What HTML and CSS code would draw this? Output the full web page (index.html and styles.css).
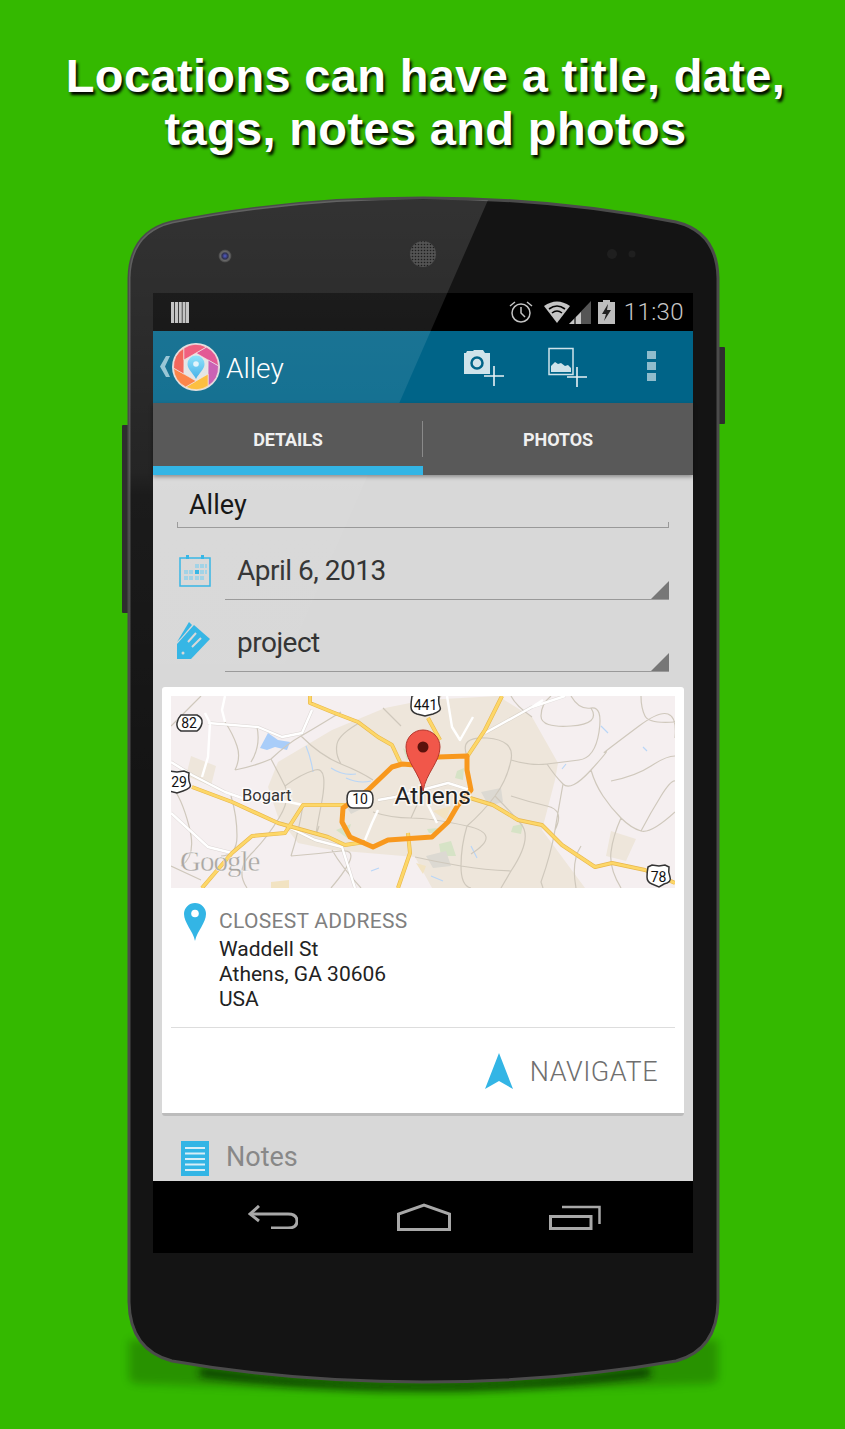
FILE: index.html
```html
<!DOCTYPE html>
<html lang="en">

<head>
    <meta charset="UTF-8">
    <title>Alley - Locations</title>
    <link rel="stylesheet" href="styles.css">
</head>

<body>
    <div class="page">
        <h1 class="headline">Locations can have a title, date,<br>tags, notes and photos</h1>

        <div class="phone">
            <!-- shell artwork, behind the screen -->
            <svg class="shell" viewBox="100 180 650 1220">
                <defs>
                    <filter id="soft" x="-10%" y="-50%" width="120%" height="200%">
                        <feGaussianBlur stdDeviation="4" />
                    </filter>
                    <radialGradient id="lens">
                        <stop offset="0" stop-color="#3a46c8" />
                        <stop offset=".45" stop-color="#14163a" />
                        <stop offset=".7" stop-color="#555" />
                        <stop offset="1" stop-color="#2a2a2a" />
                    </radialGradient>
                    <pattern id="mesh" width="3" height="3" patternUnits="userSpaceOnUse">
                        <circle cx="1.500" cy="1.500" r=".8" fill="#000" />
                    </pattern>
                </defs>
                <path d="M129 1340H718V1378Q718 1384 700 1384Q560 1390 423 1390Q290 1390 147 1384Q129 1384 129 1378Z" fill="#0b3a00" opacity=".3" filter="url(#soft)" />
                <path d="M200 1368Q320 1384 423 1384Q530 1384 650 1368V1376Q530 1390 423 1390Q320 1390 200 1376Z" fill="#041c00" opacity=".85" filter="url(#soft)" />
                <rect x="122" y="425" width="8" height="188" rx="1" fill="#2e2e2e" />
                <rect x="718" y="347" width="7" height="77" rx="1" fill="#2e2e2e" />
                <path d="M129 278Q130 232 172 222Q290 198 423 198Q556 198 676 222Q717 232 718 278V1302Q717 1350 676 1361Q556 1382 423 1382Q290 1382 172 1361Q130 1350 129 1302Z" fill="#141414" stroke="#4b4b4b" stroke-width="3" />
                <circle cx="225" cy="256" r="6.500" fill="url(#lens)" />
                <circle cx="423" cy="254" r="14.500" fill="#151515" />
                <circle cx="423" cy="254" r="13" fill="#3c3c3c" />
                <circle cx="423" cy="254" r="13" fill="url(#mesh)" />
                <circle cx="612" cy="254" r="5" fill="#1f1f1f" />
                <circle cx="632" cy="254" r="3.500" fill="#1f1f1f" />
            </svg>

            <div class="screen">
                <div class="status-bar">
                    <svg class="ic-barcode" viewBox="0 0 18 21">
                        <path d="M0 0h3.200v21H0zM4 0h3.200v21H4zM8 0h2.800v21H8zM11.500 0h3v21h-3zM15 0h3v21h-3z" fill="#bdbdbd" />
                    </svg>
                    <div class="status-right">
                        <svg class="ic-alarm" viewBox="0 0 24 24" fill="none" stroke="#c4c4c4">
                            <circle cx="12" cy="13" r="9" stroke-width="1.500" />
                            <path d="M12 7v6l4 4" stroke-width="1.500" />
                            <path d="M1 6l5-4M23 6l-5-4" stroke-width="1.500" />
                        </svg>
                        <svg class="ic-signal" viewBox="0 0 48 24">
                            <path d="M0 6Q13-3 26 6L13 23Z" fill="#c4c4c4" />
                            <path d="M5 9Q13 3 21 9M8 13Q13 9 18 13" fill="none" stroke="#000" stroke-width="1.600" />
                            <path d="M25 24L47 1V24Z" fill="#555" />
                            <path d="M25 24L30 19V24ZM32 24V17L37 12V24Z" fill="#c4c4c4" />
                        </svg>
                        <svg class="ic-battery" viewBox="0 0 17 24">
                            <path d="M5 0h7v2h5v22H0V2h5z" fill="#bdbdbd" />
                            <path d="M10 4L4 14h4l-2 7 7-11H9z" fill="#222" />
                        </svg>
                        <span class="clock">11:30</span>
                    </div>
                </div>

                <div class="app-bar">
                    <svg class="ic-chevron" viewBox="0 0 10 21">
                        <path d="M10 0L5 10.500 10 21H6L0 10.500 6 0z" fill="#8fc0d2" />
                    </svg>
                    <svg class="logo" viewBox="0 0 48 48">
                        <defs>
                            <linearGradient id="logo-pin" x1="0" y1="0" x2="0" y2="1">
                                <stop offset="0" stop-color="#86e0fa" />
                                <stop offset="1" stop-color="#33a9e6" />
                            </linearGradient>
                        </defs>
                        <circle cx="24" cy="24" r="24" fill="#dcdcdc" />
                        <circle cx="24" cy="24" r="16" fill="#e2e2e2" />
                        <g stroke="#f0e6e6" stroke-width=".6">
                            <path d="M24 10L36 17 46.500 23.100A22.500 22.500 0 0 0 34.300 4Z" fill="#e0488a" />
                            <path d="M24 10L36 17 46.500 23.100A22.500 22.500 0 0 0 34.300 4Z" fill="#c552ad" transform="rotate(60 24 24)" />
                            <path d="M24 10L36 17 46.500 23.100A22.500 22.500 0 0 0 34.300 4Z" fill="#fdb92e" transform="rotate(120 24 24)" />
                            <path d="M24 10L36 17 46.500 23.100A22.500 22.500 0 0 0 34.300 4Z" fill="#fc7a38" transform="rotate(180 24 24)" />
                            <path d="M24 10L36 17 46.500 23.100A22.500 22.500 0 0 0 34.300 4Z" fill="#f2574c" transform="rotate(240 24 24)" />
                            <path d="M24 10L36 17 46.500 23.100A22.500 22.500 0 0 0 34.300 4Z" fill="#ef4f72" transform="rotate(300 24 24)" />
                        </g>
                        <path d="M24 36C21 30 15.500 26.500 15.500 21A8.500 8.500 0 0 1 32.500 21C32.500 26.500 27 30 24 36Z" fill="url(#logo-pin)" />
                        <circle cx="24" cy="21" r="2.800" fill="#dff3fb" />
                    </svg>
                    <span class="app-title">Alley</span>
                    <div class="actions">
                        <svg class="ic-action" viewBox="0 0 42 40">
                            <path d="M0 6h2l1-2h6l1-1h9l2 3h5v21H0z" fill="#cfe3ea" />
                            <circle cx="13" cy="16" r="5.500" fill="none" stroke="#006488" stroke-width="2.500" />
                            <path d="M30 19v20M20 29h20" stroke="#e8f1f4" stroke-width="1.600" />
                        </svg>
                        <svg class="ic-action ic-gallery" viewBox="0 0 42 40">
                            <rect x="1" y="1.500" width="24" height="26" fill="none" stroke="#cfe3ea" stroke-width="1.500" />
                            <path d="M3 25v-6l4-4 3 2 3-1 4 3 3-1 3 3v4z" fill="#cfe3ea" />
                            <path d="M29 20v20M19 30h20" stroke="#e8f1f4" stroke-width="1.600" />
                        </svg>
                        <div class="overflow">
                            <span></span>
                            <span></span>
                            <span></span>
                        </div>
                    </div>
                </div>

                <div class="tabs">
                    <div class="tab tab-active">DETAILS</div>
                    <div class="tab">PHOTOS</div>
                </div>

                <div class="content">
                    <div class="name-field">Alley</div>

                    <div class="row">
                        <svg class="ic-calendar" viewBox="0 0 32 32">
                            <rect x="1" y="3" width="30" height="28" fill="none" stroke="#33b5e5" stroke-width="1.500" />
                            <path d="M7 0h3v4H7zM22 0h3v4h-3z" fill="#33b5e5" />
                            <path d="M16 9h4v4h-4zM21 9h4v4h-4zM26 9h2v4h-2zM5 15h4v4H5zM10 15h4v4h-4zM21 15h4v4h-4zM26 15h2v4h-2zM5 21h4v4H5zM10 21h4v4h-4zM16 21h4v4h-4zM21 21h4v4h-4z" fill="#a0d2e6" />
                            <path d="M16 15h4v4h-4z" fill="#33b5e5" />
                        </svg>
                        <div class="field">April 6, 2013</div>
                    </div>

                    <div class="row">
                        <svg class="ic-tag" viewBox="0 0 34 38">
                            <path d="M12 0l3 3L4 16 0 20z" fill="#33b5e5" />
                            <path d="M17 3L33 17 14 37H0V22Z" fill="#33b5e5" />
                            <path d="M11 20l8-9M15 25l9-9" stroke="#d8d8d8" stroke-width="2" />
                            <circle cx="6" cy="31" r="1.500" fill="#d8d8d8" />
                        </svg>
                        <div class="field">project</div>
                    </div>

                    <div class="card">
                        <svg class="map" viewBox="0 0 504 192" font-family="Roboto, sans-serif">
                            <rect width="504" height="192" fill="#f5eff0" />
                            <path d="M107 66L161 34 214 12 254 4 327 0 361 21 387 67 384 84 371 134 414 192H261L244 161 161 154 127 147 107 121 97 91ZM20 60L45 70 40 90 15 80ZM440 135L465 143 455 165 435 160Z" fill="#eee6db" />

                            <!-- water -->
                            <path d="M89 52L97 37 107 44 119 46 116 54 104 51 96 54Z" fill="#a9cdf9" />
                            <path d="M135 50Q140 62 142 76M175 82Q188 88 200 85M160 72Q172 80 185 78M430 30L437 37M472 51L476 55M395 68L391 73M200 175L208 172M260 180L272 185M300 150L306 162" fill="none" stroke="#b9d6f7" stroke-width="1.200" />

                            <!-- parks and blocks -->
                            <path d="M232 52L240 58 236 64ZM286 75L293 72 292 84 284 82ZM165 134L180 128 176 142ZM256 133L268 132 266 137 258 137ZM342 130L352 128 350 138 340 136ZM268 148L280 145 285 160 270 160Z" fill="#d6e3c6" />
                            <path d="M175 110L185 104 192 112 180 118ZM255 160L275 155 280 170 262 172ZM310 96L330 92 332 106 318 110Z" fill="#dcd9d2" />
                            <path d="M100 186L118 184 118 192 100 192ZM245 167L255 170 252 178ZM262 115L280 110 275 124Z" fill="#f2e3c2" />

                            <!-- minor roads -->
                            <path fill="none" stroke="#cfc8bc" stroke-width="1.200" stroke-linejoin="round" d="M54 26Q62 38 66 50T64 74M64 74Q84 70 100 63Q108 78 114 90T108 122Q96 142 80 158T76 192M100 63Q116 48 130 40T170 16M130 40Q150 60 170 68T202 84M114 90Q130 78 144 74T150 110T148 130M170 68Q164 58 166 48T190 26M202 116Q220 122 240 122T296 130T300 158M240 122L250 100M296 130Q312 116 324 100T340 64T316 42T296 60M340 64Q360 70 376 68T408 64T428 36T420 12T400 0M376 68Q384 80 392 88T420 74T434 56T468 30T504 42M420 74Q424 88 432 100T450 122T470 135T504 116M392 88Q388 110 384 134T370 186L372 192M450 122Q442 140 440 156T450 192M340 100Q358 106 376 110T384 134M324 100Q338 114 350 128T340 175L330 192M296 130Q290 150 290 170T300 192M244 161Q266 166 290 170T340 175M120 160Q146 158 170 155T160 192M0 170L30 184M60 100Q66 120 66 140T50 160M0 30Q10 20 20 10L30 0M380 0Q370 8 370 20T400 30T420 12M470 0Q470 12 474 20T504 26M470 135Q480 116 490 100T504 85M270 0L254 20M212 12Q222 22 230 30M410 150Q400 165 405 192M440 85Q465 80 480 70T504 60M340 0Q345 10 361 21M0 90Q10 100 18 130T10 170M86 31Q90 50 80 66M132 109Q128 135 120 160M161 154Q170 170 190 192" />

                            <!-- white roads -->
                            <g fill="none" stroke="#b9b4ac" stroke-width="3.400" opacity=".4" stroke-linejoin="round">
                                <path d="M0 66L21 79 54 96 71 102M0 117L37 151 61 157M107 126L144 144 171 151 184 192M37 27L87 31 111 41 131 37 141 14M207 104L224 101 277 87 299 94M314 37L361 11 394 0" />
                            </g>
                            <g fill="none" stroke="#fff" stroke-width="2.400" stroke-linejoin="round">
                                <path d="M0 66L21 79 54 96 71 102 118 106 132 109M0 117L37 151 61 157M107 126L144 144 171 151 184 192M34 17L39 27 37 61 31 81M37 27L87 31 111 41 131 37 141 14M207 104L224 101 277 87 299 94M207 114L201 127 194 144M314 37L361 11 394 0M302 21L289 44 281 31 276 0M54 0L51 14 54 26M257 109L266 127M361 11L372 4" />
                            </g>

                            <!-- yellow highways -->
                            <g fill="none" stroke="#e8b74c" stroke-width="4" stroke-linejoin="round">
                                <path d="M139 0L139 7 161 16 187 26 207 41 221 49 229 66M257 22L269 44M331 0L314 34 296 61M21 91L61 106 107 127 157 141 174 149 194 146M31 192L61 157 81 140 114 137 132 109 174 109M299 102L322 109 347 124 371 129 391 149 424 171 441 167 474 174 504 187M237 137L239 157 227 192" />
                            </g>
                            <g fill="none" stroke="#fdd768" stroke-width="2.800" stroke-linejoin="round">
                                <path d="M139 0L139 7 161 16 187 26 207 41 221 49 229 66M257 22L269 44M331 0L314 34 296 61M21 91L61 106 107 127 157 141 174 149 194 146M31 192L61 157 81 140 114 137 132 109 174 109M299 102L322 109 347 124 371 129 391 149 424 171 441 167 474 174 504 187M237 137L239 157 227 192" />
                            </g>

                            <!-- route -->
                            <path d="M296 60L296 74 300 94 287 109 277 126 261 141 217 144 202 151 179 141 171 126 172 112 197 94 221 71 231 68 244 69 267 61Z" fill="none" stroke="#f8981d" stroke-width="5" stroke-linejoin="round" />

                            <!-- labels -->
                            <text class="map-logo" x="9" y="175">Google</text>
                            <text class="map-halo" x="71" y="105">Bogart</text>
                            <text class="map-small" x="71" y="105">Bogart</text>
                            <text class="map-halo map-city" x="223.500" y="108">Athens</text>
                            <text class="map-big" x="223.500" y="108">Athens</text>

                            <!-- shields -->
                            <g class="shield">
                                <path d="M10 19H26Q32 22 31 27T26 35H10Q5 32 6 27T10 19Z" />
                                <text x="18" y="32">82</text>
                                <path d="M241 0L246 -2 254 -1 263 -2 268 0Q267 7 269 11T262 18L254 20 246 18Q240 16 240 11T241 0Z" />
                                <text x="254.500" y="14">441</text>
                                <path d="M-7 77L-2 75 6 76 13 75 18 77Q17 84 19 88T12 95L6 97 -2 95Q-8 93 -8 88T-7 77Z" />
                                <text x="8" y="91">29</text>
                                <path d="M182 95H197Q202 95 202 103T197 112H182Q176 112 176 103T182 95Z" />
                                <text x="189" y="108">10</text>
                                <path d="M477 171L481 169 488 170 494 169 498 171Q497 176 499 181T493 188L488 191 481 188Q476 186 476 181T477 171Z" />
                                <text x="487.500" y="185.500">78</text>
                            </g>

                            <!-- pin -->
                            <path d="M252 95C249 77 235 66 235 51A17 17 0 0 1 269 51C269 66 255 77 252 95Z" fill="#f1574a" stroke="#b5382e" stroke-width="1" />
                            <circle cx="252" cy="51" r="5.500" fill="#5b120c" />
                        </svg>

                        <div class="address">
                            <svg class="ic-place" viewBox="0 0 22 38">
                                <path d="M11 38C9 28 0 20 0 11A11 11 0 0 1 22 11C22 20 13 28 11 38Z" fill="#33b5e5" />
                                <circle cx="11" cy="10.500" r="3.800" fill="#fff" />
                            </svg>
                            <div>
                                <div class="address-label">CLOSEST ADDRESS</div>
                                <div class="address-text">Waddell St<br>Athens, GA 30606<br>USA</div>
                            </div>
                        </div>

                        <div class="card-actions">
                            <svg class="ic-navigate" viewBox="0 0 28 36">
                                <path d="M14 0L28 36 14 28 0 36Z" fill="#33b5e5" />
                            </svg>
                            <span class="navigate">NAVIGATE</span>
                        </div>
                    </div>

                    <div class="notes">
                        <svg class="ic-notes" viewBox="0 0 28 35">
                            <rect width="28" height="35" fill="#33b5e5" />
                            <path d="M4 7h20M4 12.500h20M4 18h20M4 23.500h20M4 29h20" stroke="#d8eef7" stroke-width="2" />
                        </svg>
                        <span class="notes-label">Notes</span>
                    </div>
                </div>

                <div class="nav-bar">
                    <svg class="ic-back" viewBox="0 0 50 24" fill="none" stroke="#a8a8a8" stroke-width="3">
                        <path d="M11 1L2 9l9 7" />
                        <path d="M2 9H40Q49 9 49 16 49 23 40 23H23" />
                    </svg>
                    <svg class="ic-home" viewBox="0 0 54 28" fill="none" stroke="#a8a8a8" stroke-width="3">
                        <path d="M1.500 26.500V11L27 2 52.500 11V26.500Z" />
                    </svg>
                    <svg class="ic-recent" viewBox="0 0 52 25" fill="none" stroke="#a8a8a8" stroke-width="3">
                        <path d="M1.500 11.500H42V23.500H1.500Z" />
                        <path d="M13 2H50.500V19" stroke-width="2.500" />
                    </svg>
                </div>
            </div>

            <!-- light streak, lies over the shell and the screen -->
            <svg class="glare" viewBox="100 180 650 1220">
                <defs>
                    <clipPath id="shell-clip">
                        <path d="M129 278Q130 232 172 222Q290 198 423 198Q556 198 676 222Q717 232 718 278V1302Q717 1350 676 1361Q556 1382 423 1382Q290 1382 172 1361Q130 1350 129 1302Z" />
                    </clipPath>
                    <linearGradient id="streak" x1="0" y1="0" x2="0" y2="1">
                        <stop offset="0" stop-color="#fff" stop-opacity=".13" />
                        <stop offset=".46" stop-color="#fff" stop-opacity=".07" />
                        <stop offset=".5" stop-color="#fff" stop-opacity=".03" />
                        <stop offset="1" stop-color="#fff" stop-opacity="0" />
                    </linearGradient>
                </defs>
                <path d="M488 200L230 790H128V200Z" fill="url(#streak)" clip-path="url(#shell-clip)" />
            </svg>
        </div>
    </div>
</body>

</html>
```

FILE: styles.css
```css
body {
    margin: 0;
    font-family: Roboto, sans-serif;
}

.page {
    width: 845px;
    height: 1429px;
    background-color: #34b900;
    overflow: hidden;
}

.headline {
    margin: 0;
    padding: 49px 0 0 6px;
    height: 197px;
    box-sizing: border-box;
    font-family: "Liberation Sans", sans-serif;
    font-size: 47px;
    font-weight: bold;
    line-height: 53px;
    letter-spacing: .35px;
    text-align: center;
    color: #fff;
    text-shadow: 2px 3px 3px #000;
}

.phone {
    position: relative;
    width: 591px;
    height: 1186px;
    margin-left: 128px;
    padding: 96px 0 0 25px;
    box-sizing: border-box;
}

.shell,
.glare {
    position: absolute;
    left: -28px;
    top: -17px;
    width: 650px;
    height: 1220px;
}

.glare {
    pointer-events: none;
}

.screen {
    position: relative;
    width: 540px;
    height: 960px;
    display: flex;
    flex-direction: column;
    background-color: #000;
}

/* status bar */
.status-bar {
    height: 38px;
    display: flex;
    align-items: center;
    justify-content: space-between;
    padding: 0 9px 0 18px;
    flex-shrink: 0;
}

.ic-barcode {
    width: 18px;
    height: 21px;
}

.status-right {
    display: flex;
    align-items: center;
}

.ic-alarm {
    width: 24px;
    height: 24px;
    margin-right: 11px;
}

.ic-signal {
    width: 48px;
    height: 24px;
    margin-right: 6px;
}

.ic-battery {
    width: 17px;
    height: 24px;
    margin-right: 9px;
}

.clock {
    font-size: 24px;
    font-weight: 300;
    letter-spacing: .4px;
    color: #c8c8c8;
}

/* action bar */
.app-bar {
    height: 72px;
    flex-shrink: 0;
    display: flex;
    align-items: center;
    background-color: #006488;
    padding-left: 7px;
}

.ic-chevron {
    width: 10px;
    height: 21px;
    margin: -2px 2px 0 0;
}

.logo {
    width: 48px;
    height: 48px;
    margin-top: -1px;
}

.app-title {
    margin: 2px 0 0 6px;
    font-size: 28px;
    font-weight: 300;
    color: #fff;
}

.actions {
    display: flex;
    align-items: center;
    margin-left: auto;
}

.ic-action {
    width: 42px;
    height: 40px;
    margin-right: 42px;
}

.ic-gallery {
    margin-right: 57px;
}

.overflow {
    display: flex;
    flex-direction: column;
    gap: 3px;
    margin-right: 37px;
    margin-top: -3px;
}

.overflow span {
    display: block;
    width: 9px;
    height: 8px;
    background-color: #8fbccc;
}

/* tabs */
.tabs {
    height: 72px;
    flex-shrink: 0;
    display: flex;
    background-color: #595959;
    box-shadow: 0 2px 4px rgba(0, 0, 0, .35);
    position: relative;
    z-index: 1;
}

.tab {
    width: 270px;
    display: flex;
    align-items: center;
    justify-content: center;
    font-size: 18px;
    font-weight: 700;
    letter-spacing: -.1px;
    color: #f0f0f0;
    box-sizing: border-box;
}

.tab-active {
    border-bottom: 9px solid #33b5e5;
    padding-top: 9px;
    background-image: linear-gradient(#8a8a8a, #8a8a8a);
    background-size: 1px 36px;
    background-position: right 18px;
    background-repeat: no-repeat;
}

/* details */
.content {
    flex: 1;
    min-height: 0;
    overflow: hidden;
    background-color: #d8d8d8;
}

.name-field {
    width: 492px;
    height: 53px;
    margin-left: 24px;
    padding: 13px 0 0 12px;
    box-sizing: border-box;
    border-bottom: 1px solid #999;
    background-image: linear-gradient(#999, #999), linear-gradient(#999, #999);
    background-size: 1px 5px;
    background-position: left bottom, right bottom;
    background-repeat: no-repeat;
    font-size: 27px;
    line-height: 34px;
    color: #111;
}

.row {
    display: flex;
    height: 72px;
}

.row svg {
    flex-shrink: 0;
}

.ic-calendar {
    width: 32px;
    height: 32px;
    margin: 27px 0 0 26px;
}

.ic-tag {
    width: 34px;
    height: 38px;
    margin: 22px 0 0 24px;
}

.ic-tag + .field {
    margin-left: 14px;
}

.field {
    flex: 1;
    margin: 0 24px 0 14px;
    padding: 26px 0 0 12px;
    border-bottom: 1px solid #999;
    font-size: 28px;
    line-height: 34px;
    letter-spacing: -.5px;
    color: #333;
    background-image: linear-gradient(to bottom right, transparent 49%, #777 51%);
    background-size: 18px 18px;
    background-position: right bottom;
    background-repeat: no-repeat;
}

.card {
    margin: 15px 9px 0;
    padding: 9px 9px 0;
    height: 429px;
    box-sizing: border-box;
    background-color: #fff;
    border-radius: 3px;
    border-bottom: 3px solid #bcbcbc;
}

.map {
    display: block;
    width: 504px;
    height: 192px;
}

.map-logo {
    font-family: "Liberation Serif", serif;
    font-size: 29px;
    fill: #aaa6a2;
    stroke: #fff;
    stroke-width: .3px;
    letter-spacing: -1px;
}

.map-small {
    font-size: 16.500px;
    fill: #333;
}

.map-halo {
    font-size: 16.500px;
    fill: #fff;
    stroke: #fff;
    stroke-width: 3px;
    opacity: .7;
}

.map-city {
    font-size: 24.500px;
}

.map-big {
    font-size: 24.500px;
    fill: #222;
}

.shield path {
    fill: #fff;
    stroke: #333;
    stroke-width: 1.500px;
}

.shield text {
    font-size: 14px;
    fill: #111;
    text-anchor: middle;
}

.address {
    display: flex;
    height: 140px;
    box-sizing: border-box;
    padding: 15px 0 0 13px;
    border-bottom: 1px solid #ddd;
}

.ic-place {
    width: 22px;
    height: 38px;
    margin-right: 13px;
    flex-shrink: 0;
}

.address-label {
    margin-top: 6px;
    font-size: 21px;
    line-height: 24px;
    letter-spacing: .3px;
    color: #808080;
}

.address-text {
    margin-top: 4px;
    font-size: 21px;
    line-height: 25px;
    color: #222;
}

.card-actions {
    display: flex;
    align-items: center;
    justify-content: flex-end;
    height: 85px;
    padding-right: 17px;
}

.ic-navigate {
    width: 28px;
    height: 36px;
    margin: 0 17px 0 0;
}

.navigate {
    margin-top: 3px;
    font-size: 27px;
    font-weight: 300;
    letter-spacing: .5px;
    color: #6f6f6f;
}

.notes {
    display: flex;
    align-items: flex-start;
    padding: 25px 0 0 28px;
}

.ic-notes {
    width: 28px;
    height: 35px;
    flex-shrink: 0;
}

.notes-label {
    margin-left: 17px;
    font-size: 27px;
    line-height: 32px;
    color: #888;
}

/* navigation bar */
.nav-bar {
    height: 72px;
    flex-shrink: 0;
    display: flex;
    align-items: center;
    background-color: #000;
    padding-left: 95px;
}

.ic-back {
    width: 50px;
    height: 24px;
    margin-right: 99px;
}

.ic-home {
    width: 54px;
    height: 28px;
    margin-right: 98px;
}

.ic-recent {
    width: 52px;
    height: 25px;
}
```
